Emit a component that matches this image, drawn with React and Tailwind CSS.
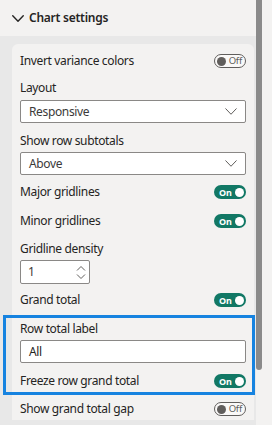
import React from 'react';

const font = { fontFamily: '"Noto Sans", "Open Sans", sans-serif' };

const Chevron = ({ w = 12, h = 7, stroke = '#605e5c', sw = 1 }) => (
    <svg width={w} height={h} viewBox={`0 0 ${w} ${h}`} fill="none" stroke={stroke} strokeWidth={sw} strokeLinecap="round" strokeLinejoin="round">
        <path d={`M0.75 0.75 L${w / 2} ${h - 0.75} L${w - 0.75} 0.75`} />
    </svg>
);

const Toggle = ({ on }) =>
    on ? (
        <div className="w-[32px] h-[14px] rounded-full bg-[#117865] flex items-center justify-between pl-[5px] pr-[2px]">
            <span className="text-[9px] leading-none font-bold text-white tracking-[-0.2px]">On</span>
            <span className="w-[9px] h-[9px] rounded-full bg-white" />
        </div>
    ) : (
        <div className="w-[32px] h-[14px] rounded-full border border-[#605e5c] bg-[#faf9f8] flex items-center justify-between pl-[2px] pr-[3px]">
            <span className="w-[9px] h-[9px] rounded-full bg-[#605e5c]" />
            <span className="text-[9.5px] leading-none text-[#605e5c] tracking-[-0.2px]">Off</span>
        </div>
    );

const ToggleRow = ({ label, on, className = '' }) => (
    <div className={`h-[22px] flex items-center justify-between ${className}`}>
        <span className="text-[12px] tracking-[-0.35px] text-[#252423]">{label}</span>
        <Toggle on={on} />
    </div>
);

const Label = ({ children, className = '' }) => (
    <div className={`h-[16px] leading-[16px] text-[12px] tracking-[-0.35px] text-[#252423] ${className}`}>{children}</div>
);

const Dropdown = ({ value }) => (
    <div className="h-[23px] bg-white border border-[#8a8886] rounded-[2px] flex items-center justify-between pl-[8px] pr-[8px]">
        <span className="text-[12px] tracking-[-0.35px] text-[#3b3a39]">{value}</span>
        <Chevron w={12} h={7} />
    </div>
);

export default function App() {
    return (
        <div className="w-[272px] h-[425px] overflow-hidden flex bg-[#f3f2f1]" style={font}>
            <div className="w-[256px] bg-[#e8e8e8] flex flex-col shrink-0">
                <div className="h-[36px] bg-[#f3f2f1] flex items-center pl-[12px] gap-[5px] shrink-0">
                    <Chevron w={12} h={7} stroke="#252423" sw={1.4} />
                    <span className="text-[12px] font-semibold tracking-[-0.25px] text-[#252423]">Chart settings</span>
                </div>
                <div className="mt-[8px] ml-[12px] w-[242px] bg-[#f3f2f1] rounded-t-[6px] px-[8px] pt-[6px] shrink-0">
                    <ToggleRow label="Invert variance colors" on={false} />
                    <Label className="mt-[8px] mb-[4px]">Layout</Label>
                    <Dropdown value="Responsive" />
                    <Label className="mt-[10px] mb-[3px]">Show row subtotals</Label>
                    <Dropdown value="Above" />
                    <ToggleRow label="Major gridlines" on className="mt-[6px]" />
                    <ToggleRow label="Minor gridlines" on className="mt-[7px]" />
                    <Label className="mt-[9px] mb-[3px]">Gridline density</Label>
                    <div className="w-[70px] h-[24px] bg-white border border-[#8a8886] rounded-[2px] flex items-center justify-between pl-[7px] pr-[3px]">
                        <span className="text-[12px] text-[#3b3a39]">1</span>
                        <div className="flex flex-col gap-[3px]">
                            <svg width="10" height="6" viewBox="0 0 10 6" fill="none" stroke="#605e5c" strokeWidth="1">
                                <path d="M1 5.5 L5 1.5 L9 5.5" />
                            </svg>
                            <svg width="10" height="6" viewBox="0 0 10 6" fill="none" stroke="#605e5c" strokeWidth="1">
                                <path d="M1 0.5 L5 4.5 L9 0.5" />
                            </svg>
                        </div>
                    </div>
                    <ToggleRow label="Grand total" on className="mt-[5px]" />
                    <div className="mt-[4px] ml-[-17px] mr-[-9px] border-[3px] border-[#1683e0] pl-[14px] pr-[6px]">
                        <Label className="mt-[3px] mb-[3px]">Row total label</Label>
                        <div className="h-[23px] bg-white border border-[#8a8886] rounded-[2px] flex items-center pl-[8px]">
                            <span className="text-[12px] tracking-[-0.35px] text-[#252423]">All</span>
                        </div>
                        <ToggleRow label="Freeze row grand total" on className="mt-[7px]" />
                    </div>
                    <ToggleRow label="Show grand total gap" on={false} className="mt-[3px]" />
                </div>
            </div>
            <div className="w-[6px] h-[370px] bg-[#8a8a8a] rounded-b-[3px] shrink-0" />
        </div>
    );
}
